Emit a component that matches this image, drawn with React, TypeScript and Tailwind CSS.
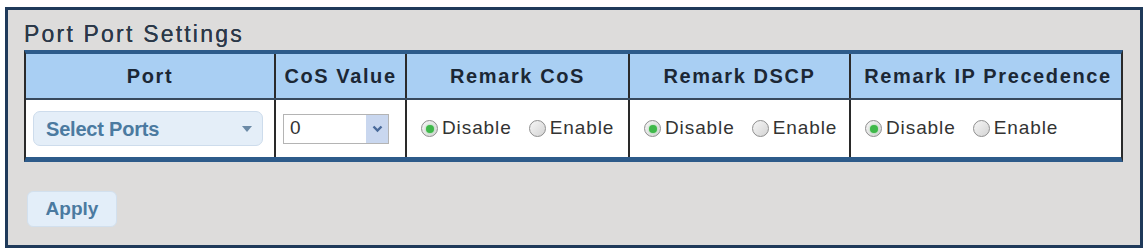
import React from 'react'

const cols = 'grid grid-cols-[248px_131px_223px_221px_276px]'

const Radio: React.FC<{ checked?: boolean; label: string }> = ({ checked, label }) => (
  <label className="flex items-center">
    <span className="w-[17px] h-[17px] rounded-full border border-[#8e8e8e] bg-gradient-to-br from-[#f6f6f6] to-[#d4d4d4] flex items-center justify-center">
      {checked && <span className="w-[8px] h-[8px] rounded-full bg-[#3fb84a] shadow-[0_0_2px_#7fe08a]" />}
    </span>
    <span className="ml-[4px] tracking-[0.9px]">{label}</span>
  </label>
)

const RadioPair: React.FC = () => (
  <div className="flex items-center gap-[17px] pl-[14px] border-l-2 border-[#2a2a2a] text-[19px] text-[#333]">
    <Radio checked label="Disable" />
    <Radio label="Enable" />
  </div>
)

const headers = ['Port', 'CoS Value', 'Remark CoS', 'Remark DSCP', 'Remark IP Precedence']

export default function App() {
  return (
    <div className="w-[1148px] h-[251px] bg-white pt-[7px] pl-[5px]" style={{ fontFamily: '"Liberation Sans", Arial, sans-serif' }}>
      <div className="w-[1138px] h-[241px] border-[3px] border-[#1f3a5a] bg-[#dddcdb] pl-[16px]">
        <div className="mt-[12px] mb-[3px] text-[23px] leading-[25px] tracking-[2.2px] text-[#2b3848] [text-shadow:0_0_0.6px_#2b3848]">Port Port Settings</div>
        <div className="w-[1099px] border-t-[4px] border-b-[5px] border-[#2d5b8a] border-x-2 border-x-[#2a2a2a] bg-white">
          <div className={`${cols} h-[46px] bg-[#a9cff3] border-b-2 border-[#38495c]`}>
            {headers.map((h, i) => (
              <div
                key={h}
                className={`flex items-center justify-center font-bold text-[20px] tracking-[1.6px] text-[#1b2735] ${i > 0 ? 'border-l-2 border-[#2a2a2a]' : ''}`}
              >
                {h}
              </div>
            ))}
          </div>
          <div className={`${cols} h-[57px]`}>
            <div className="flex items-center pl-[7px]">
              <div className="w-[230px] h-[35px] rounded-[7px] bg-[#e4eef8] border border-[#cddcec] flex items-center justify-between pl-[12px] pr-[10px]">
                <span className="font-bold text-[20px] tracking-[-0.2px] text-[#4b7aa0]">Select Ports</span>
                <svg width="10" height="6" viewBox="0 0 10 6"><path d="M0 0h10L5 6z" fill="#6b8aa6" /></svg>
              </div>
            </div>
            <div className="flex items-center pl-[7px] border-l-2 border-[#2a2a2a]">
              <div className="w-[106px] h-[30px] border border-[#b4b4b4] bg-white flex items-center justify-between">
                <span className="pl-[6px] text-[19px] text-[#333]">0</span>
                <span className="w-[22px] h-full bg-[#c9d7ef] flex items-center justify-center">
                  <svg width="11" height="8" viewBox="0 0 11 8"><path d="M1.5 1.5l4 4 4-4" stroke="#4a6a9a" strokeWidth="2.4" fill="none" /></svg>
                </span>
              </div>
            </div>
            <RadioPair />
            <RadioPair />
            <RadioPair />
          </div>
        </div>
        <button className="mt-[29px] ml-[3px] w-[90px] h-[36px] rounded-[6px] bg-[#e3eef9] border border-[#d2e0ee] font-bold text-[19px] text-[#4b7aa0]">
          Apply
        </button>
      </div>
    </div>
  )
}
